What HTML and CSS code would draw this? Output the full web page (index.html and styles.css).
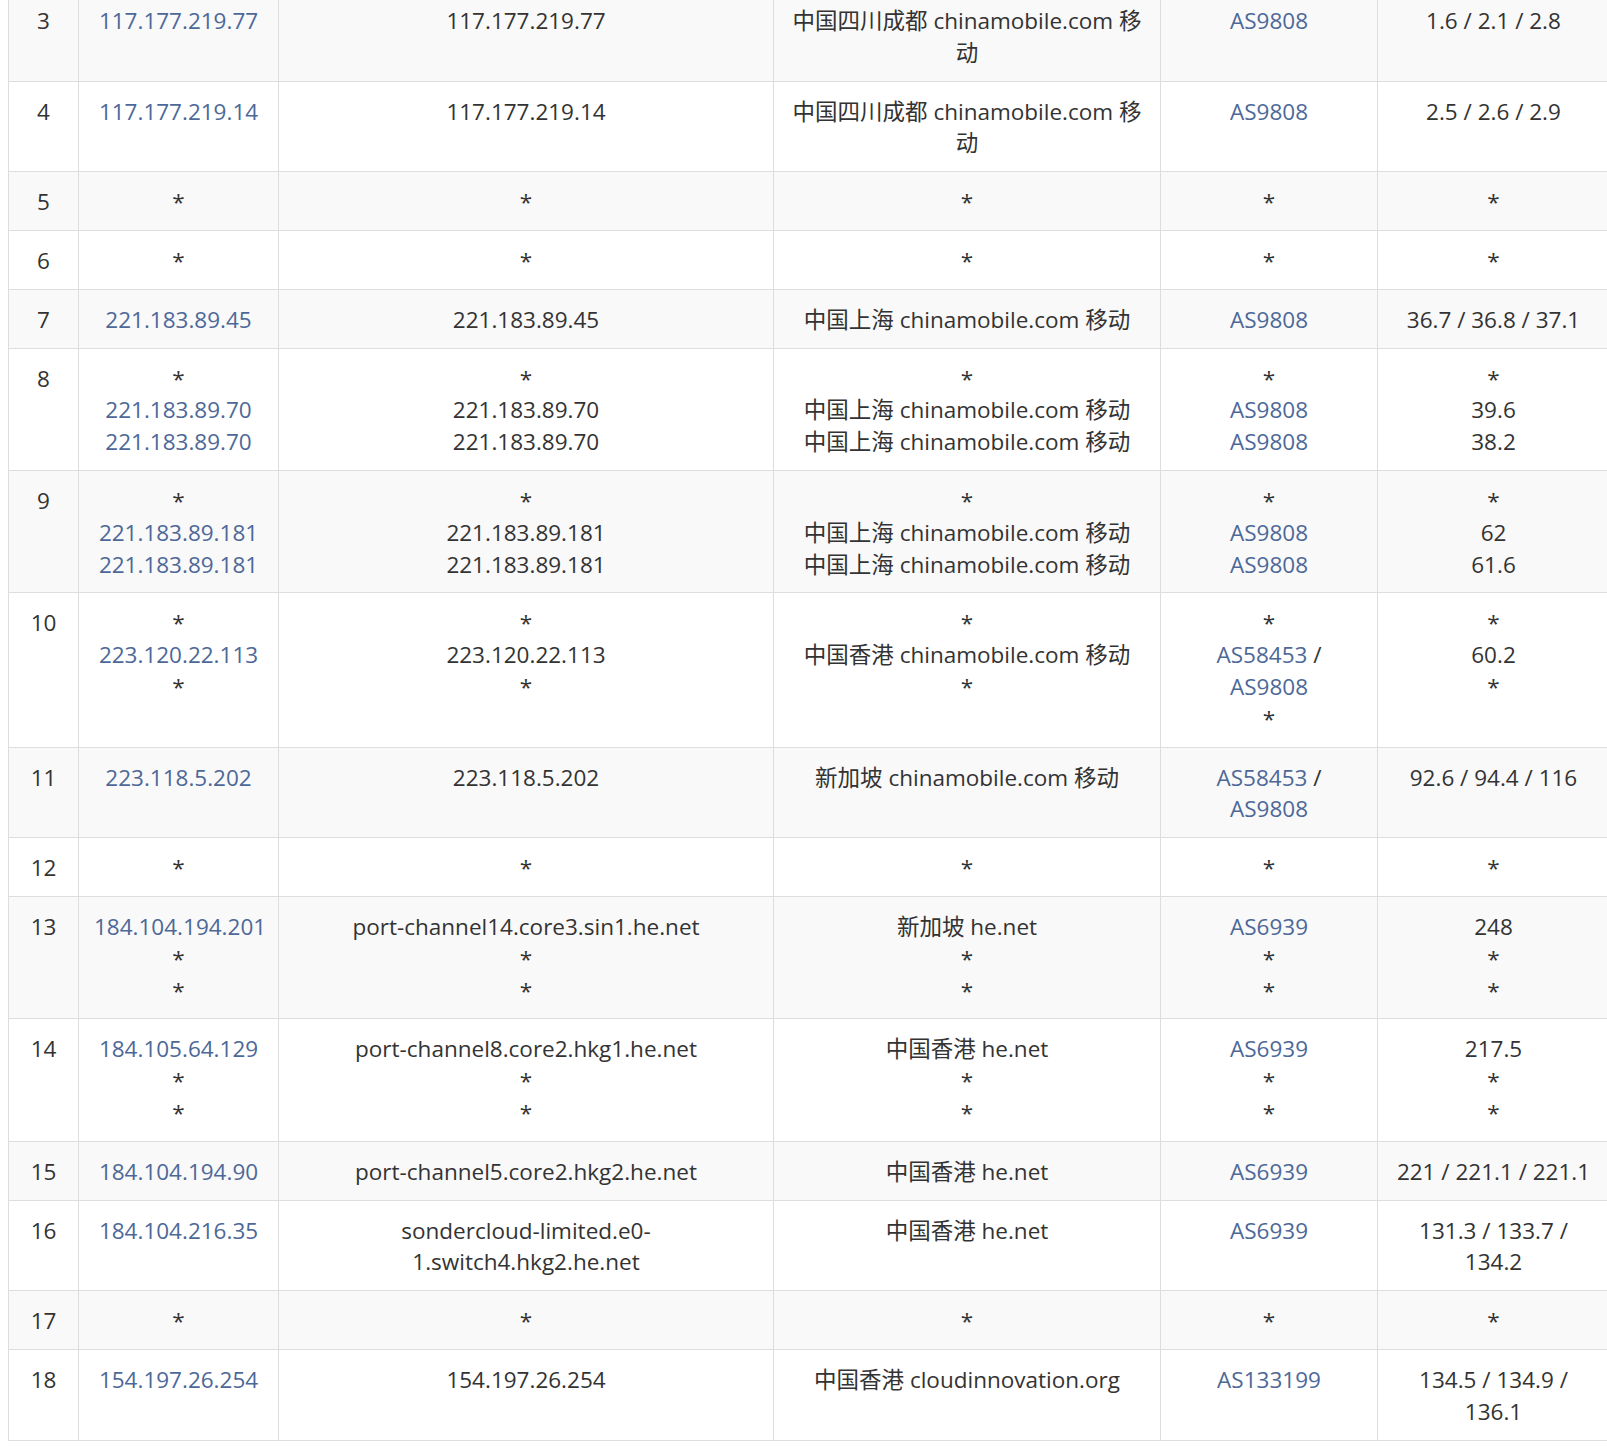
FILE: index.html
```html
<!DOCTYPE html>
<html lang="zh-CN">
<head>
<meta charset="utf-8">
<title>Traceroute</title>
<link rel="stylesheet" href="styles.css">
</head>
<body>
<table class="trace">
  <colgroup>
    <col class="c-hop"><col class="c-ip"><col class="c-host"><col class="c-geo"><col class="c-as"><col class="c-rtt">
  </colgroup>
  <tbody>
    <tr>
      <td>3</td>
      <td><a href="#">117.177.219.77</a></td>
      <td>117.177.219.77</td>
      <td>中国四川成都 chinamobile.com 移动</td>
      <td><a href="#">AS9808</a></td>
      <td>1.6 / 2.1 / 2.8</td>
    </tr>
    <tr>
      <td>4</td>
      <td><a href="#">117.177.219.14</a></td>
      <td>117.177.219.14</td>
      <td>中国四川成都 chinamobile.com 移动</td>
      <td><a href="#">AS9808</a></td>
      <td>2.5 / 2.6 / 2.9</td>
    </tr>
    <tr>
      <td>5</td><td>*</td><td>*</td><td>*</td><td>*</td><td>*</td>
    </tr>
    <tr>
      <td>6</td><td>*</td><td>*</td><td>*</td><td>*</td><td>*</td>
    </tr>
    <tr>
      <td>7</td>
      <td><a href="#">221.183.89.45</a></td>
      <td>221.183.89.45</td>
      <td>中国上海 chinamobile.com 移动</td>
      <td><a href="#">AS9808</a></td>
      <td>36.7 / 36.8 / 37.1</td>
    </tr>
    <tr>
      <td>8</td>
      <td><div>*</div><div><a href="#">221.183.89.70</a></div><div><a href="#">221.183.89.70</a></div></td>
      <td><div>*</div><div>221.183.89.70</div><div>221.183.89.70</div></td>
      <td><div>*</div><div>中国上海 chinamobile.com 移动</div><div>中国上海 chinamobile.com 移动</div></td>
      <td><div>*</div><div><a href="#">AS9808</a></div><div><a href="#">AS9808</a></div></td>
      <td><div>*</div><div>39.6</div><div>38.2</div></td>
    </tr>
    <tr>
      <td>9</td>
      <td><div>*</div><div><a href="#">221.183.89.181</a></div><div><a href="#">221.183.89.181</a></div></td>
      <td><div>*</div><div>221.183.89.181</div><div>221.183.89.181</div></td>
      <td><div>*</div><div>中国上海 chinamobile.com 移动</div><div>中国上海 chinamobile.com 移动</div></td>
      <td><div>*</div><div><a href="#">AS9808</a></div><div><a href="#">AS9808</a></div></td>
      <td><div>*</div><div>62</div><div>61.6</div></td>
    </tr>
    <tr>
      <td>10</td>
      <td><div>*</div><div><a href="#">223.120.22.113</a></div><div>*</div></td>
      <td><div>*</div><div>223.120.22.113</div><div>*</div></td>
      <td><div>*</div><div>中国香港 chinamobile.com 移动</div><div>*</div></td>
      <td><div>*</div><div><a href="#">AS58453</a> / <a href="#">AS9808</a></div><div>*</div></td>
      <td><div>*</div><div>60.2</div><div>*</div></td>
    </tr>
    <tr>
      <td>11</td>
      <td><a href="#">223.118.5.202</a></td>
      <td>223.118.5.202</td>
      <td>新加坡 chinamobile.com 移动</td>
      <td><a href="#">AS58453</a> / <a href="#">AS9808</a></td>
      <td>92.6 / 94.4 / 116</td>
    </tr>
    <tr>
      <td>12</td><td>*</td><td>*</td><td>*</td><td>*</td><td>*</td>
    </tr>
    <tr>
      <td>13</td>
      <td><div><a href="#">184.104.194.201</a></div><div>*</div><div>*</div></td>
      <td><div>port-channel14.core3.sin1.he.net</div><div>*</div><div>*</div></td>
      <td><div>新加坡 he.net</div><div>*</div><div>*</div></td>
      <td><div><a href="#">AS6939</a></div><div>*</div><div>*</div></td>
      <td><div>248</div><div>*</div><div>*</div></td>
    </tr>
    <tr>
      <td>14</td>
      <td><div><a href="#">184.105.64.129</a></div><div>*</div><div>*</div></td>
      <td><div>port-channel8.core2.hkg1.he.net</div><div>*</div><div>*</div></td>
      <td><div>中国香港 he.net</div><div>*</div><div>*</div></td>
      <td><div><a href="#">AS6939</a></div><div>*</div><div>*</div></td>
      <td><div>217.5</div><div>*</div><div>*</div></td>
    </tr>
    <tr>
      <td>15</td>
      <td><a href="#">184.104.194.90</a></td>
      <td>port-channel5.core2.hkg2.he.net</td>
      <td>中国香港 he.net</td>
      <td><a href="#">AS6939</a></td>
      <td>221 / 221.1 / 221.1</td>
    </tr>
    <tr>
      <td>16</td>
      <td><a href="#">184.104.216.35</a></td>
      <td>sondercloud-limited.e0-1.switch4.hkg2.he.net</td>
      <td>中国香港 he.net</td>
      <td><a href="#">AS6939</a></td>
      <td>131.3 / 133.7 / 134.2</td>
    </tr>
    <tr>
      <td>17</td><td>*</td><td>*</td><td>*</td><td>*</td><td>*</td>
    </tr>
    <tr>
      <td>18</td>
      <td><a href="#">154.197.26.254</a></td>
      <td>154.197.26.254</td>
      <td>中国香港 cloudinnovation.org</td>
      <td><a href="#">AS133199</a></td>
      <td>134.5 / 134.9 / 136.1</td>
    </tr>
  </tbody>
</table>
</body>
</html>
```

FILE: styles.css
```css
html, body {
  overflow: hidden;
}

body {
  margin: 0;
  padding: 0 0 0 8px;
  background: #ffffff;
  color: #333333;
  font-family: "Open Sans", "Noto Sans CJK SC", sans-serif;
  font-size: 22.5px;
  line-height: 31.8px;
}

.trace {
  width: 1601px;
  margin-top: -10px;
  border-collapse: collapse;
  table-layout: fixed;
}

.c-hop { width: 70px; }
.c-ip { width: 200px; }
.c-host { width: 495px; }
.c-geo { width: 387px; }
.c-as { width: 217px; }
.c-rtt { width: 232px; }

.trace td {
  border: 1px solid #dddddd;
  padding: 14px 15px 12px;
  text-align: center;
  vertical-align: top;
}

.trace tr:nth-child(odd) td {
  background: #f9f9f9;
}

.trace a {
  color: #4d6898;
  text-decoration: none;
}
```
